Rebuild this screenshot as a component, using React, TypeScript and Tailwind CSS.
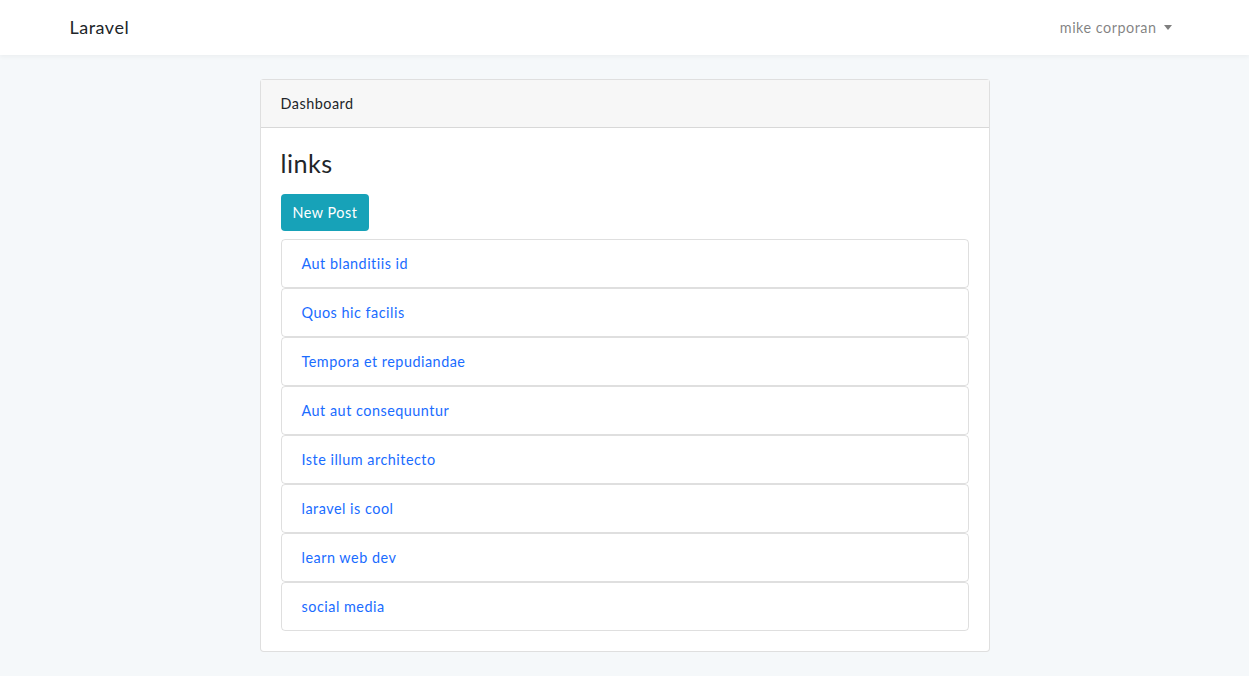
const links = [
  'Aut blanditiis id',
  'Quos hic facilis',
  'Tempora et repudiandae',
  'Aut aut consequuntur',
  'Iste illum architecto',
  'laravel is cool',
  'learn web dev',
  'social media',
];

export default function App() {
  return (
    <div className="min-h-[676px] bg-[#f5f8fa] text-[14.4px] leading-[1.6] tracking-[0.035em] text-[#212529] font-['Lato','Open_Sans',sans-serif]">
      {/* navbar */}
      <nav className="h-[55px] bg-white shadow-[0_2px_4px_rgba(0,0,0,0.04)]">
        <div className="mx-auto flex h-full w-[1140px] items-center justify-between px-[15px]">
          <a className="text-[18px] text-[#212529]">Laravel</a>
          <a className="flex items-center pr-[8px] text-[rgba(0,0,0,0.5)]">
            mike corporan
            <span className="ml-[7px] h-0 w-0 border-x-[4px] border-t-[5px] border-x-transparent border-t-[rgba(0,0,0,0.5)]" />
          </a>
        </div>
      </nav>

      {/* main */}
      <main className="py-6">
        <div className="mx-auto w-[730px]">
          <div className="rounded border border-[rgba(0,0,0,0.125)] bg-white">
            <div className="h-[48px] border-b border-[rgba(0,0,0,0.125)] bg-[#f7f7f7] px-5 py-3 leading-[23px]">
              Dashboard
            </div>
            <div className="p-5">
              <h3 className="text-[25.2px] leading-[30px]">links</h3>
              <button className="mt-4 h-[37px] rounded bg-[#17a2b8] px-3 text-white">
                New Post
              </button>
              <ul className="mt-2">
                {links.map((l) => (
                  <li
                    key={l}
                    className="h-[49px] rounded border border-[rgba(0,0,0,0.125)] px-5 py-3 leading-[23px]"
                  >
                    <a className="text-[#1a6cff]">{l}</a>
                  </li>
                ))}
              </ul>
            </div>
          </div>
        </div>
      </main>
    </div>
  );
}
